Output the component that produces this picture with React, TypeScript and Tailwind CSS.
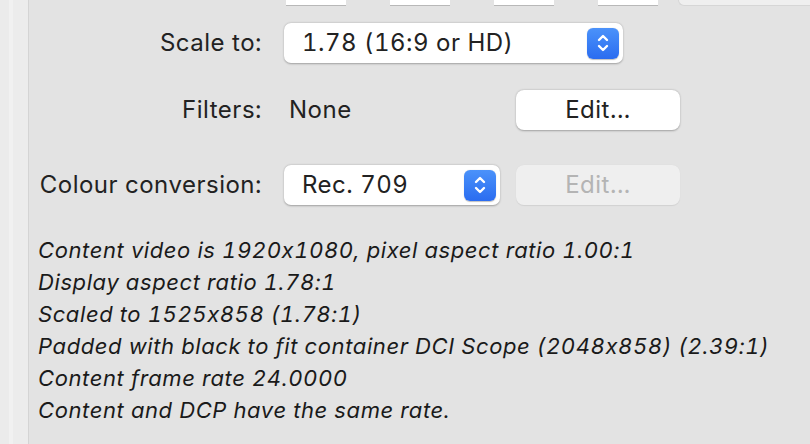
import React from 'react';

function Stepper() {
  return (
    <div className="flex h-[31px] w-[32px] items-center justify-center rounded-[6px] bg-gradient-to-b from-[#4b92fa] to-[#2b6cf0] shadow-[0_0.5px_1px_rgba(0,0,0,0.25)]">
      <svg width="14" height="22" viewBox="0 0 14 22" fill="none" stroke="white" strokeWidth="2.4" strokeLinecap="round" strokeLinejoin="round">
        <path d="M3 8 L7 4 L11 8" />
        <path d="M3 14 L7 18 L11 14" />
      </svg>
    </div>
  );
}

function Select({ value, width }: { value: string; width: string }) {
  return (
    <div className={`flex h-[40px] ${width} items-center justify-between rounded-[7px] bg-white pl-[18px] pr-[4px] shadow-[0_0.5px_2px_rgba(0,0,0,0.3)]`}>
      <span className="text-[#222]">{value}</span>
      <Stepper />
    </div>
  );
}

export default function App() {
  const info = [
    'Content video is 1920x1080, pixel aspect ratio 1.00:1',
    'Display aspect ratio 1.78:1',
    'Scaled to 1525x858 (1.78:1)',
    'Padded with black to fit container DCI Scope (2048x858) (2.39:1)',
    'Content frame rate 24.0000',
    'Content and DCP have the same rate.',
  ];

  return (
    <div
      className="flex h-[444px] w-[810px] overflow-hidden bg-[#e3e3e3] text-[24px] leading-[30px] tracking-[0.5px] text-[#222] tabular-nums [font-feature-settings:'calt'_0]"
      style={{ fontFamily: 'Inter, "Noto Sans", sans-serif' }}
    >
      {/* left sidebar edge */}
      <div className="flex shrink-0 border-r border-[#d4d4d4]">
        <div className="w-[9px] bg-[#ebebeb]" />
        <div className="w-[4px] bg-[#f1f1f1]" />
        <div className="w-[15px] bg-[#ececec]" />
      </div>

      <div className="flex flex-1 flex-col">
        {/* cut-off fields at the top */}
        <div className="flex h-[7px] items-start pl-[257px]">
          <div className="h-[6px] w-[60px] border-b border-[#b8b8b8] bg-white" />
          <div className="ml-[44px] h-[6px] w-[60px] border-b border-[#b8b8b8] bg-white" />
          <div className="ml-[44px] h-[6px] w-[60px] border-b border-[#b8b8b8] bg-white" />
          <div className="ml-[44px] h-[6px] w-[60px] border-b border-[#b8b8b8] bg-white" />
          <div className="ml-[20px] h-[6px] flex-1 rounded-bl-[7px] border-b border-l border-[#d6d6d6] bg-[#efefef]" />
        </div>

        {/* form */}
        <div className="mt-[16px] grid grid-cols-[224px_auto] items-center gap-x-[22px] pl-[9px]">
          <div className="text-right">Scale to:</div>
          <Select value="1.78 (16:9 or HD)" width="w-[339px]" />

          <div className="mt-[27px] text-right">Filters:</div>
          <div className="mt-[27px] flex items-center">
            <span className="w-[232px] pl-[5px]">None</span>
            <button className="h-[40px] w-[164px] rounded-[8px] bg-white text-[#222] shadow-[0_0.5px_2px_rgba(0,0,0,0.3)]">Edit...</button>
          </div>

          <div className="mt-[35px] text-right">Colour conversion:</div>
          <div className="mt-[35px] flex items-center">
            <Select value="Rec. 709" width="w-[216px]" />
            <button disabled className="ml-[16px] h-[40px] w-[164px] rounded-[8px] bg-[#efefef] text-[#b4b4b4] shadow-[0_0.5px_1px_rgba(0,0,0,0.08)]">Edit...</button>
          </div>
        </div>

        {/* description */}
        <div className="mt-[29px] pl-[9px] text-[22px] italic leading-[32px] tracking-[0.6px] text-[#1a1a1a]">
          {info.map((line) => (
            <div key={line}>{line}</div>
          ))}
        </div>
      </div>
    </div>
  );
}
